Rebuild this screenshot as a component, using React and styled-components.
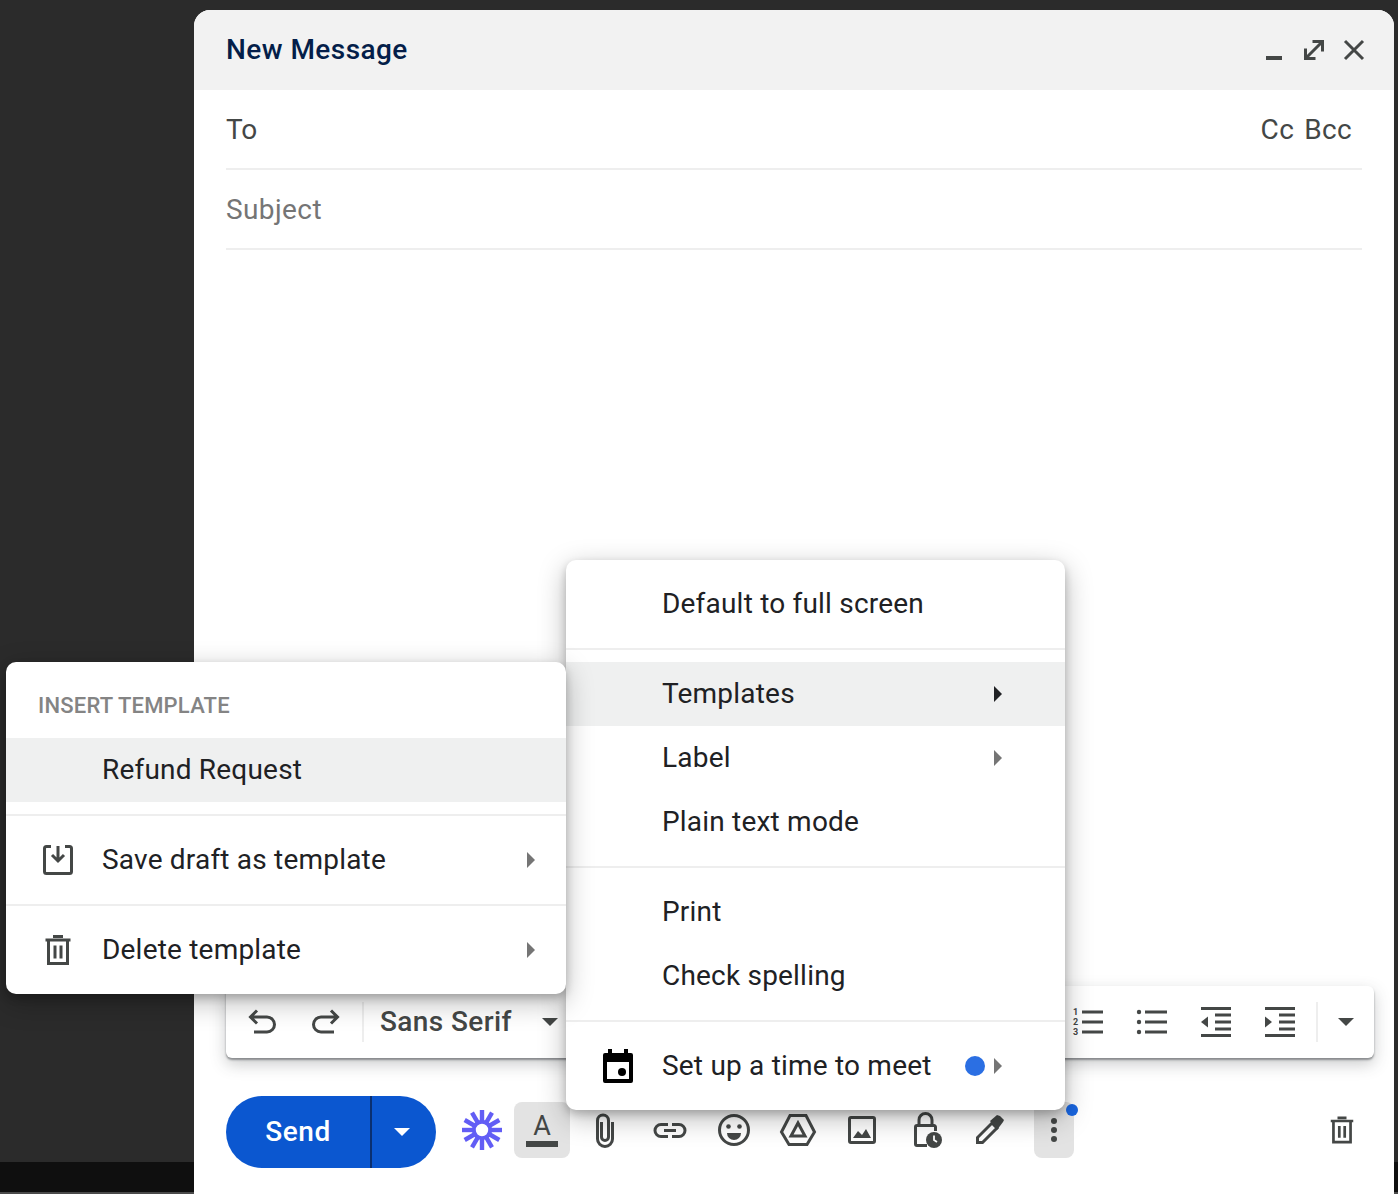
import React from "react";
import styled, { createGlobalStyle } from "styled-components";

const Global = createGlobalStyle`
  html, body { margin: 0; padding: 0; background: #2b2b2b; }
  * { box-sizing: border-box; }
  body { font-family: Roboto, "Liberation Sans", sans-serif; }
`;

const Page = styled.div`
  position: relative;
  display: grid;
  grid-template-columns: 194px 1200px 4px;
  width: 1398px;
  height: 1194px;
  overflow: hidden;
`;
const Gutter = styled.div`
  display: flex;
  flex-direction: column;
`;
const GutterFill = styled.div`
  flex: 1;
  background: #2b2b2b;
`;
const GutterBand = styled.div`
  height: 32px;
  background: #0f0f0f;
  border-bottom: 2px solid #4a4a4a;
`;
const Composer = styled.section`
  display: flex;
  flex-direction: column;
  height: 1184px;
  margin-top: 10px;
  background: #fff;
  border-radius: 16px 16px 0 0;
  overflow: hidden;
`;
const Header = styled.header`
  display: flex;
  align-items: center;
  height: 80px;
  flex: none;
  padding: 0 20px 0 32px;
  background: #f2f2f2;
`;
const Title = styled.h1`
  flex: 1;
  margin: 0 0 2px;
  color: #041e49;
  font-size: 28px;
  font-weight: 500;
  letter-spacing: 0.45px;
`;
const Field = styled.div`
  display: flex;
  align-items: center;
  justify-content: space-between;
  height: 80px;
  flex: none;
  margin: 0 32px;
  padding-right: 10px;
  border-bottom: 2px solid #eeeeee;
  color: ${(p) => (p.$muted ? "#757575" : "#444746")};
  font-size: 28px;
`;
const FieldLabel = styled.span`
  letter-spacing: ${(p) => (p.$muted ? "0.4px" : "0")};
`;
const FieldEnd = styled.span`
  letter-spacing: 0.3px;
  word-spacing: 3px;
`;
const Body = styled.div`
  flex: 1;
`;
const Toolbar = styled.div`
  display: flex;
  align-items: center;
  height: 72px;
  flex: none;
  margin: 0 20px 0 32px;
  padding: 0 4px;
  background: #fff;
  border-radius: 6px;
  box-shadow: 0 2px 2px rgba(60, 64, 67, 0.5), 0 6px 16px rgba(60, 64, 67, 0.28);
`;
const Slot = styled.div`
  display: flex;
  align-items: center;
  justify-content: center;
  flex: none;
  width: ${(p) => p.$w || 64}px;
`;
const Sep = styled.div`
  flex: none;
  width: 2px;
  height: 40px;
  margin: 0 4px;
  background: #eeeeee;
`;
const FontName = styled.span`
  margin: 0 0 2px 12px;
  color: #444746;
  font-size: 28px;
  font-weight: 500;
  letter-spacing: 0.4px;
`;
const FontCaret = styled.div`
  display: flex;
  margin-left: 30px;
`;
const ToolbarEnd = styled.div`
  display: flex;
  align-items: center;
  margin-left: auto;
`;
const Actions = styled.div`
  display: flex;
  align-items: center;
  height: 72px;
  flex: none;
  margin: 38px 0 26px;
  padding: 0 34px 4px 32px;
`;
const Send = styled.div`
  display: flex;
  flex: none;
  align-self: flex-start;
  width: 210px;
  height: 72px;
  margin-right: 26px;
  border-radius: 36px;
  background: #0b57d0;
  color: #fff;
  overflow: hidden;
`;
const SendLabel = styled.div`
  display: flex;
  align-items: center;
  justify-content: center;
  width: 144px;
  padding-bottom: 2px;
  font-size: 28px;
  font-weight: 500;
  letter-spacing: 0.6px;
`;
const SendMenu = styled.div`
  display: flex;
  align-items: center;
  justify-content: center;
  flex: 1;
  padding-right: 4px;
  border-left: 2px solid #0a2f70;
`;
const Logo = styled.div`
  display: flex;
  flex: none;
  margin-right: 8px;
`;
const Active = styled.div`
  position: relative;
  display: flex;
  align-items: center;
  justify-content: center;
  width: ${(p) => p.$w}px;
  height: 56px;
  border-radius: 8px;
  background: #e3e3e3;
`;
const ColorPick = styled.div`
  display: flex;
  flex-direction: column;
  align-items: center;
  color: #444746;
`;
const ColorLetter = styled.span`
  font-size: 27px;
  line-height: 24px;
  margin-bottom: 3px;
`;
const ColorBar = styled.span`
  width: 32px;
  height: 6px;
  background: #444746;
`;
const Notice = styled.span`
  position: absolute;
  top: 2px;
  right: -4px;
  width: 12px;
  height: 12px;
  border-radius: 50%;
  background: #1a66e0;
`;
const Trash = styled.div`
  display: flex;
  margin-left: auto;
`;
const Menu = styled.div`
  position: absolute;
  left: ${(p) => p.$left}px;
  top: ${(p) => p.$top}px;
  width: ${(p) => p.$w}px;
  padding: ${(p) => p.$pad};
  background: #fff;
  border-radius: 10px;
  box-shadow: 0 4px 8px rgba(0, 0, 0, 0.2), 0 8px 28px rgba(0, 0, 0, 0.28);
`;
const MenuHeading = styled.div`
  display: flex;
  align-items: center;
  height: 76px;
  padding: 10px 0 0 32px;
  color: #848484;
  font-size: 22px;
  font-weight: 500;
  letter-spacing: 0.2px;
`;
const Item = styled.div`
  display: flex;
  align-items: center;
  height: 64px;
  padding: 0 ${(p) => p.$right}px 2px 32px;
  color: #202124;
  font-size: 28px;
  letter-spacing: 0.2px;
  background: ${(p) => (p.$on ? "#eff0f0" : "transparent")};
`;
const ItemIcon = styled.div`
  display: flex;
  flex: none;
  width: 40px;
  height: 40px;
  margin: 2px 24px 0 0;
`;
const ItemEnd = styled.div`
  display: flex;
  align-items: center;
  gap: 9px;
  margin: 2px 0 0 auto;
`;
const Dot = styled.span`
  width: 20px;
  height: 20px;
  border-radius: 50%;
  background: #2b6fe3;
`;
const Divider = styled.div`
  height: 2px;
  margin: 12px 0;
  background: #eeeeee;
`;
const Svg = styled.svg`
  display: block;
  flex: none;
  fill: none;
  stroke: ${(p) => p.$c || "#444746"};
  stroke-width: 3;
`;
const Solid = styled.g`
  fill: ${(p) => p.$c || "#444746"};
  stroke: none;
`;
const Digit = styled.text`
  fill: #444746;
  stroke: none;
  font-size: 9px;
  font-weight: 700;
  font-family: Roboto, sans-serif;
`;

const Ic = ({ size = 40, c, children }) => (
  <Svg $c={c} width={size} height={size} viewBox="0 0 40 40">{children}</Svg>
);
const Caret = ({ c }) => (
  <svg width="16" height="8" viewBox="0 0 16 8"><path d="M0 0h16L8 8z" fill={c || "#444746"} /></svg>
);
const Arrow = ({ c }) => (
  <svg width="8" height="16" viewBox="0 0 8 16"><path d="M0 0l8 8-8 8z" fill={c} /></svg>
);
const TrashIcon = ({ size }) => (
  <Ic size={size}>
    <path d="M15 6.5h10M7.5 10h25M10.5 10v23.5h19V10M17 15.5v13M23 15.5v13" />
  </Ic>
);
const Star = () => (
  <Svg width="40" height="40" viewBox="0 0 40 40" $c="#625df5">
    <g strokeWidth="4.4">
      {[0, 30, 60, 90, 120, 150, 180, 210, 240, 270, 300, 330].map((a) => (
        <line key={a} x1="20" y1="11" x2="20" y2="0" transform={`rotate(${a} 20 20)`} />
      ))}
    </g>
    <circle cx="20" cy="20" r="8.2" strokeWidth="4" />
  </Svg>
);

export default function App() {
  return (
    <Page>
      <Global />
      <Gutter>
        <GutterFill />
        <GutterBand />
      </Gutter>
      <Composer>
        <Header>
          <Title>New Message</Title>
          <Ic><Solid><rect x="12" y="26" width="16" height="4" /></Solid></Ic>
          <Ic><path d="M18.5 11.5h10v10M11.5 18.5v10h10M27 13L13 27" /></Ic>
          <Ic><path d="M11 11l18 18M29 11L11 29" /></Ic>
        </Header>
        <Field><FieldLabel>To</FieldLabel><FieldEnd>Cc Bcc</FieldEnd></Field>
        <Field $muted><FieldLabel $muted>Subject</FieldLabel></Field>
        <Body />
        <Toolbar>
          <Slot><Ic><path d="M15 8.5L8.5 15l6.5 6.5M9 15h16a7.5 7.5 0 0 1 0 15H12" /></Ic></Slot>
          <Slot><Ic><path d="M25 8.5l6.5 6.5-6.5 6.5M31 15H15a7.5 7.5 0 0 0 0 15h13" /></Ic></Slot>
          <Sep />
          <FontName>Sans Serif</FontName>
          <FontCaret><Caret /></FontCaret>
          <ToolbarEnd>
            <Slot>
              <Ic>
                <path d="M14 10h21M14 20h21M14 30h21" />
                <Digit x="5" y="13">1</Digit>
                <Digit x="5" y="23">2</Digit>
                <Digit x="5" y="33">3</Digit>
              </Ic>
            </Slot>
            <Slot>
              <Ic>
                <path d="M13 10h22M13 20h22M13 30h22" />
                <Solid><circle cx="7" cy="10" r="2.2" /><circle cx="7" cy="20" r="2.2" /><circle cx="7" cy="30" r="2.2" /></Solid>
              </Ic>
            </Slot>
            <Slot>
              <Ic>
                <path d="M5 6.5h30M19 13h16M19 20h16M19 27h16M5 33.5h30" />
                <Solid><path d="M5 20l7-5.5v11z" /></Solid>
              </Ic>
            </Slot>
            <Slot>
              <Ic>
                <path d="M5 6.5h30M19 13h16M19 20h16M19 27h16M5 33.5h30" />
                <Solid><path d="M12 20l-7-5.5v11z" /></Solid>
              </Ic>
            </Slot>
            <Sep />
            <Slot $w={48}><Caret /></Slot>
          </ToolbarEnd>
        </Toolbar>
        <Actions>
          <Send>
            <SendLabel>Send</SendLabel>
            <SendMenu><Caret c="#fff" /></SendMenu>
          </Send>
          <Logo><Star /></Logo>
          <Slot>
            <Active $w={56}>
              <ColorPick><ColorLetter>A</ColorLetter><ColorBar /></ColorPick>
            </Active>
          </Slot>
          <Slot><Ic><path d="M26.5 12v17a7.500 7.500 0 0 1-15 0V10.500a5.500 5.500 0 0 1 11 0V27a3.500 3.500 0 0 1-7 0V12" /></Ic></Slot>
          <Slot><Ic><path d="M18 14.5h-7a6 6 0 0 0 0 12h7M22 14.5h7a6 6 0 0 1 0 12h-7M14 20.5h12" /></Ic></Slot>
          <Slot>
            <Ic>
              <circle cx="20" cy="20" r="14.5" />
              <Solid>
                <circle cx="14.5" cy="16.5" r="2.3" />
                <circle cx="25.5" cy="16.5" r="2.3" />
                <path d="M13 23h14a7 7 0 0 1-14 0z" />
              </Solid>
            </Ic>
          </Slot>
          <Slot><Ic><path d="M12 5.5h16L36.5 22 29 34.5H11L3.5 22zM20 13l7 13H13z" /></Ic></Slot>
          <Slot>
            <Ic>
              <rect x="7.5" y="7.5" width="25" height="25" rx="1.5" />
              <Solid><path d="M11 28l5-7 4 4 4-6 5 9z" /></Solid>
            </Ic>
          </Slot>
          <Slot>
            <Ic>
              <path d="M21 35.5H11A1.5 1.5 0 0 1 9.5 34V17a1.5 1.5 0 0 1 1.5-1.5h17a1.5 1.5 0 0 1 1.5 1.5v4M13 15V10a6.5 6.5 0 0 1 13 0v5" />
              <Solid><circle cx="28" cy="30" r="8" /></Solid>
              <path d="M28 25.5V30l3 2" stroke="#fff" strokeWidth="1.8" />
            </Ic>
          </Slot>
          <Slot>
            <Ic>
              <path d="M7.5 32.5v-5L22 13l5 5-14.5 14.5z" />
              <Solid><path d="M20 11l7-6 3 1 4 4-1 2-6 8z" /></Solid>
            </Ic>
          </Slot>
          <Slot>
            <Active $w={40}>
              <Ic>
                <Solid>
                  <circle cx="20" cy="11" r="3" />
                  <circle cx="20" cy="20" r="3" />
                  <circle cx="20" cy="29" r="3" />
                </Solid>
              </Ic>
              <Notice />
            </Active>
          </Slot>
          <Trash><TrashIcon size={36} /></Trash>
        </Actions>
      </Composer>
      <Gutter>
        <GutterFill />
        <GutterBand />
      </Gutter>

      <Menu $left={566} $top={560} $w={499} $pad="12px 0">
        <Item $right={63}><ItemIcon />Default to full screen</Item>
        <Divider />
        <Item $right={63} $on>
          <ItemIcon />Templates
          <ItemEnd><Arrow c="#202124" /></ItemEnd>
        </Item>
        <Item $right={63}>
          <ItemIcon />Label
          <ItemEnd><Arrow c="#757575" /></ItemEnd>
        </Item>
        <Item $right={63}><ItemIcon />Plain text mode</Item>
        <Divider />
        <Item $right={63}><ItemIcon />Print</Item>
        <Item $right={63}><ItemIcon />Check spelling</Item>
        <Divider />
        <Item $right={63}>
          <ItemIcon>
            <Ic>
              <Solid $c="#000">
                <path d="M10 3h4v4h12V3h4v4h3a2 2 0 0 1 2 2v26a2 2 0 0 1-2 2H7a2 2 0 0 1-2-2V9a2 2 0 0 1 2-2h3zM9 16v17h22V16z" fillRule="evenodd" />
                <circle cx="24" cy="26" r="4" />
              </Solid>
            </Ic>
          </ItemIcon>
          Set up a time to meet
          <ItemEnd><Dot /><Arrow c="#757575" /></ItemEnd>
        </Item>
      </Menu>

      <Menu $left={6} $top={662} $w={560} $pad="0 0 12px">
        <MenuHeading>INSERT TEMPLATE</MenuHeading>
        <Item $right={31} $on><ItemIcon />Refund Request</Item>
        <Divider />
        <Item $right={31}>
          <ItemIcon>
            <Ic><path d="M13 6.5H8.5a2 2 0 0 0-2 2v23a2 2 0 0 0 2 2h23a2 2 0 0 0 2-2v-23a2 2 0 0 0-2-2H27M20 6v15M14 15l6 6 6-6" /></Ic>
          </ItemIcon>
          Save draft as template
          <ItemEnd><Arrow c="#757575" /></ItemEnd>
        </Item>
        <Divider />
        <Item $right={31}>
          <ItemIcon><TrashIcon /></ItemIcon>
          Delete template
          <ItemEnd><Arrow c="#757575" /></ItemEnd>
        </Item>
      </Menu>
    </Page>
  );
}
